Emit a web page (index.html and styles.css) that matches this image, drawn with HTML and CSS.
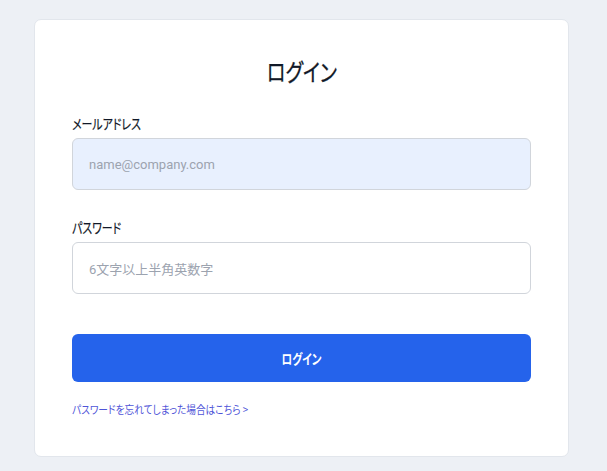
FILE: index.html
```html
<!DOCTYPE html>
<html lang="ja">
<head>
<meta charset="utf-8">
<title>ログイン</title>
<link rel="stylesheet" href="styles.css">
</head>
<body>
<main class="card">
  <h1 class="title"><span class="narrow narrow-center">ログイン</span></h1>
  <form class="form">
    <div class="field field-email">
      <label class="label"><span class="narrow">メールアドレス</span></label>
      <div class="input input-filled"><span class="placeholder">name@company.com</span></div>
    </div>
    <div class="field field-password">
      <label class="label"><span class="narrow">パスワード</span></label>
      <div class="input"><span class="placeholder">6文字以上半角英数字</span></div>
    </div>
    <button type="button" class="btn"><span class="narrow narrow-center">ログイン</span></button>
  </form>
  <a class="link" href="#"><span class="narrow narrow-link">パスワードを忘れてしまった場合はこちら &gt;</span></a>
</main>
</body>
</html>
```

FILE: styles.css
```css
* { box-sizing: border-box; }
html, body { margin: 0; padding: 0; }
body {
  background: #edf0f5;
  font-family: "Noto Sans CJK JP", sans-serif;
  color: #111827;
  padding: 19px 0 0 34px;
  height: 471px;
}
.card {
  width: 535px;
  background: #ffffff;
  border: 1px solid #e2e6ec;
  border-radius: 7px;
  padding: 35px 37px 38px 37px;
}
.narrow {
  display: inline-block;
  font-feature-settings: "palt";
  transform: scaleX(0.78);
  transform-origin: left center;
  white-space: nowrap;
}
.narrow-center { transform-origin: center center; }
.narrow-link { transform: scaleX(0.88); }
.title {
  margin: 0 0 26px 0;
  font-family: "Noto Sans CJK JP", sans-serif;
  font-size: 24px;
  line-height: 32px;
  font-weight: 400;
  text-align: center;
  color: #111827;
  -webkit-text-stroke: 0.3px #111827;
}
.title .narrow { transform: scaleX(0.8); }
.form { display: flex; flex-direction: column; }
.field { display: flex; flex-direction: column; }
.field-email { margin-bottom: 27px; }
.field-password { margin-bottom: 40px; }
.label {
  font-family: "Noto Sans CJK JP", sans-serif;
  font-size: 14px;
  line-height: 20px;
  font-weight: 400;
  margin-bottom: 5px;
  color: #111827;
  -webkit-text-stroke: 0.2px #111827;
}
.input {
  height: 52px;
  border: 1px solid #d1d5db;
  border-radius: 6px;
  background: #fff;
  display: flex;
  align-items: center;
  padding: 0 16px;
}
.input-filled { background: #e8f0fe; }
.placeholder {
  font-family: "Roboto", "Noto Sans CJK JP", sans-serif;
  font-size: 13px;
  color: #9ca3af;
}
.btn {
  height: 48px;
  border: none;
  border-radius: 6px;
  background: #2563eb;
  color: #ffffff;
  font-family: "Noto Sans CJK JP", sans-serif;
  font-size: 14px;
  font-weight: 700;
  margin-bottom: 18px;
  padding: 0;
}
.btn .narrow { transform: scaleX(0.76); }
.link {
  display: block;
  font-family: "Noto Sans CJK JP", sans-serif;
  font-size: 11px;
  line-height: 18px;
  color: #4f55d8;
  text-decoration: none;
}
```
